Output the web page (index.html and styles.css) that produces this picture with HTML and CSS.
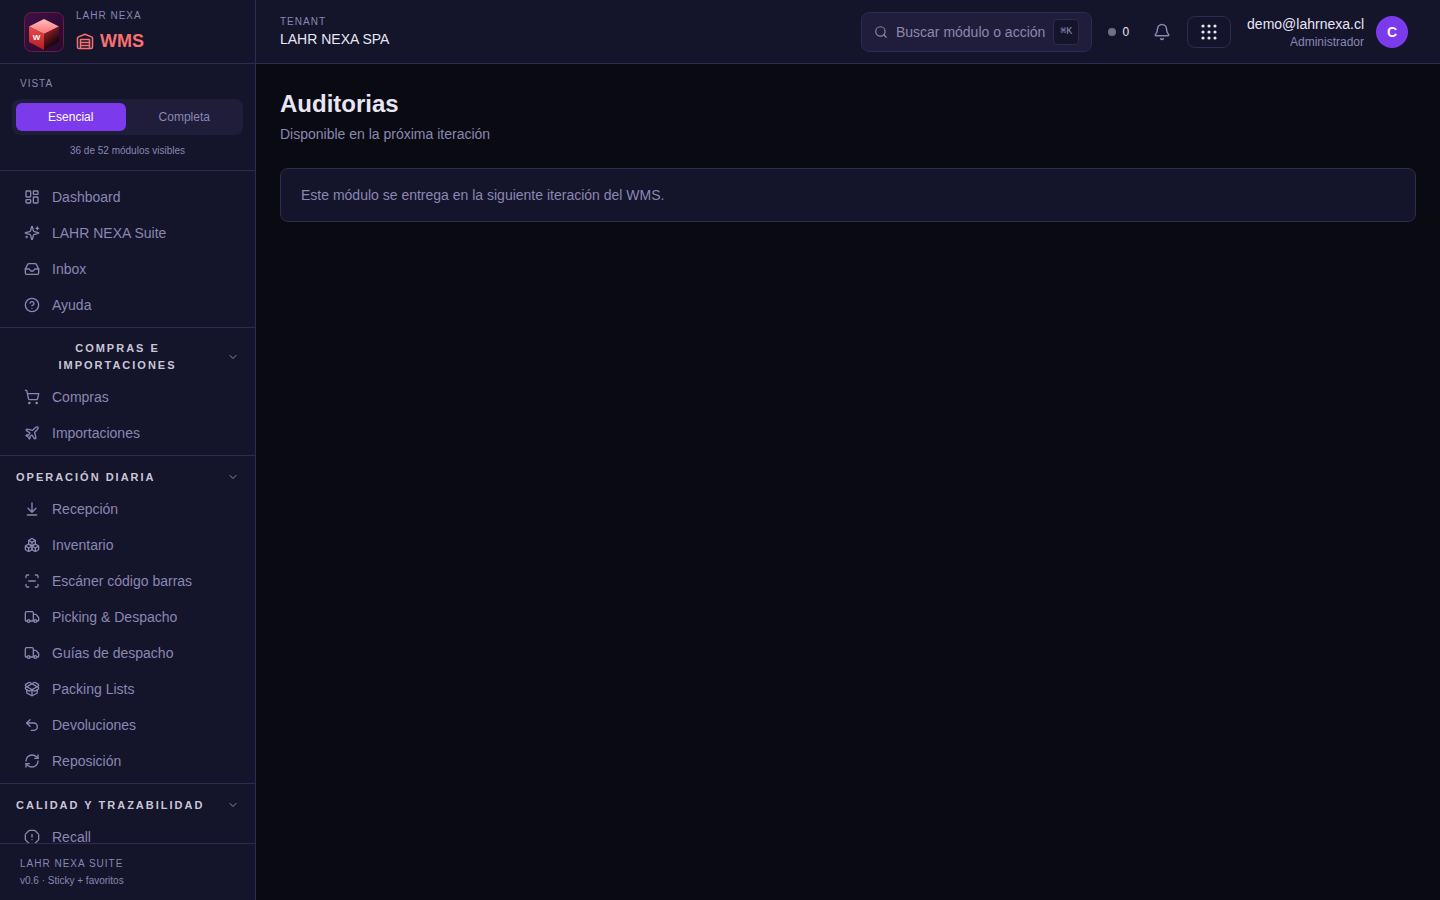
FILE: index.html
```html
<!DOCTYPE html>
<html lang="es">
<head>
<meta charset="utf-8">
<meta name="viewport" content="width=device-width, initial-scale=1">
<title>Auditorias · LAHR NEXA WMS</title>
<link rel="stylesheet" href="styles.css">
</head>
<body>
<div class="app">
  <aside class="sidebar">
    <div class="brand">
      <svg class="brand-logo" viewBox="0 0 40 40" aria-hidden="true">
        <defs>
          <linearGradient id="bg" x1="0" y1="0" x2="1" y2="1"><stop offset="0" stop-color="#3f1045"/><stop offset="1" stop-color="#26092e"/></linearGradient>
          <linearGradient id="top" x1="0" y1="0" x2="0" y2="1"><stop offset="0" stop-color="#ffc0bc"/><stop offset="1" stop-color="#fb7076"/></linearGradient>
          <linearGradient id="left" x1="0" y1="0" x2="0" y2="1"><stop offset="0" stop-color="#ee4a4c"/><stop offset="1" stop-color="#b01c22"/></linearGradient>
          <linearGradient id="right" x1="0.2" y1="0" x2="0.7" y2="1"><stop offset="0" stop-color="#9c262c"/><stop offset="0.3" stop-color="#74191f"/><stop offset="0.750" stop-color="#1c070d"/><stop offset="1" stop-color="#1c070d"/></linearGradient>
        </defs>
        <rect x="0.5" y="0.5" width="39" height="39" rx="7" fill="url(#bg)" stroke="#6b1d40"/>
        <path d="M20 7 35 14.500 20 22 5 14.500Z" fill="url(#top)"/>
        <path d="M5 14.500 20 22V38L5 30Z" fill="url(#left)"/>
        <path d="M35 14.500 20 22V38L35 30Z" fill="url(#right)"/>
        <text x="12.500" y="28" class="logo-letter">W</text>
      </svg>
      <div class="brand-text">
        <span class="eyebrow">LAHR NEXA</span>
        <span class="brand-name">
          <svg class="icon-18" viewBox="0 0 24 24" aria-hidden="true"><path d="M22 8.350V20a2 2 0 0 1-2 2H4a2 2 0 0 1-2-2V8.350A2 2 0 0 1 3.260 6.500l8-3.200a2 2 0 0 1 1.480 0l8 3.200A2 2 0 0 1 22 8.350Z"/><path d="M6 18h12M6 14h12"/><path d="M6 22V10h12v12"/></svg>
          WMS
        </span>
      </div>
    </div>

    <div class="view">
      <span class="eyebrow view-label" id="view-label">VISTA</span>
      <div class="toggle" role="group" aria-labelledby="view-label">
        <button class="toggle-btn is-active" type="button" aria-pressed="true">Esencial</button>
        <button class="toggle-btn" type="button" aria-pressed="false">Completa</button>
      </div>
      <p class="view-hint">36 de 52 módulos visibles</p>
    </div>

    <nav class="nav">
      <div class="nav-list nav-main">
        <a class="nav-item" href="#"><svg viewBox="0 0 24 24" aria-hidden="true"><rect width="7" height="9" x="3" y="3" rx="1"/><rect width="7" height="5" x="14" y="3" rx="1"/><rect width="7" height="9" x="14" y="12" rx="1"/><rect width="7" height="5" x="3" y="16" rx="1"/></svg>Dashboard</a>
        <a class="nav-item" href="#"><svg viewBox="0 0 24 24" aria-hidden="true"><path d="M9.937 15.500A2 2 0 0 0 8.500 14.063l-6.135-1.582a.5.5 0 0 1 0-.962L8.500 9.936A2 2 0 0 0 9.937 8.500l1.582-6.135a.5.5 0 0 1 .963 0L14.063 8.500A2 2 0 0 0 15.500 9.937l6.135 1.581a.5.5 0 0 1 0 .964L15.500 14.063a2 2 0 0 0-1.437 1.437l-1.582 6.135a.5.5 0 0 1-.963 0z"/><path d="M20 3v4M22 5h-4M4 17v2M5 18H3"/></svg>LAHR NEXA Suite</a>
        <a class="nav-item" href="#"><svg viewBox="0 0 24 24" aria-hidden="true"><path d="M22 12h-6l-2 3h-4l-2-3H2"/><path d="M5.450 5.110 2 12v6a2 2 0 0 0 2 2h16a2 2 0 0 0 2-2v-6l-3.450-6.890A2 2 0 0 0 16.760 4H7.240a2 2 0 0 0-1.790 1.110z"/></svg>Inbox</a>
        <a class="nav-item" href="#"><svg viewBox="0 0 24 24" aria-hidden="true"><circle cx="12" cy="12" r="10"/><path d="M9.090 9a3 3 0 0 1 5.830 1c0 2-3 3-3 3M12 17h.01"/></svg>Ayuda</a>
      </div>

      <section class="nav-group">
        <button class="group-head" type="button" aria-expanded="true"><span class="group-title">COMPRAS E IMPORTACIONES</span><svg viewBox="0 0 24 24" aria-hidden="true"><path d="m6 9 6 6 6-6"/></svg></button>
        <div class="nav-list">
          <a class="nav-item" href="#"><svg viewBox="0 0 24 24" aria-hidden="true"><circle cx="8" cy="21" r="1"/><circle cx="19" cy="21" r="1"/><path d="M2.050 2.050h2l2.660 12.420a2 2 0 0 0 2 1.580h9.780a2 2 0 0 0 1.950-1.570l1.650-7.430H5.120"/></svg>Compras</a>
          <a class="nav-item" href="#"><svg viewBox="0 0 24 24" aria-hidden="true"><path d="M17.800 19.200 16 11l3.500-3.500C21 6 21.500 4 21 3c-1-.5-3 0-4.500 1.500L13 8 4.800 6.200c-.5-.1-.9.1-1.100.5l-.3.5c-.2.5-.1 1 .3 1.300L9 12l-2 3H4l-1 1 3 2 2 3 1-1v-3l3-2 3.500 5.300c.3.4.8.5 1.300.3l.5-.2c.4-.3.6-.7.5-1.200z"/></svg>Importaciones</a>
        </div>
      </section>

      <section class="nav-group">
        <button class="group-head" type="button" aria-expanded="true"><span class="group-title">OPERACIÓN DIARIA</span><svg viewBox="0 0 24 24" aria-hidden="true"><path d="m6 9 6 6 6-6"/></svg></button>
        <div class="nav-list">
          <a class="nav-item" href="#"><svg viewBox="0 0 24 24" aria-hidden="true"><path d="M12 17V3M6 11l6 6 6-6M19 21H5"/></svg>Recepción</a>
          <a class="nav-item" href="#"><svg viewBox="0 0 24 24" aria-hidden="true"><path d="M2.970 12.920A2 2 0 0 0 2 14.630v3.240a2 2 0 0 0 .97 1.710l3 1.800a2 2 0 0 0 2.060 0L12 19v-5.500l-5-3-4.030 2.420Z"/><path d="m7 16.500-4.740-2.850M7 16.500l5-3M7 16.500v5.170"/><path d="M12 13.500V19l3.970 2.380a2 2 0 0 0 2.060 0l3-1.800a2 2 0 0 0 .97-1.710v-3.240a2 2 0 0 0-.97-1.710L17 10.500l-5 3Z"/><path d="m17 16.500-5-3M17 16.500l4.740-2.850M17 16.500v5.170"/><path d="M7.970 4.420A2 2 0 0 0 7 6.130v4.370l5 3 5-3V6.130a2 2 0 0 0-.97-1.710l-3-1.800a2 2 0 0 0-2.060 0l-3 1.800Z"/><path d="M12 8 7.260 5.150M12 8l4.740-2.850M12 13.500V8"/></svg>Inventario</a>
          <a class="nav-item" href="#"><svg viewBox="0 0 24 24" aria-hidden="true"><path d="M3 7V5a2 2 0 0 1 2-2h2M17 3h2a2 2 0 0 1 2 2v2M21 17v2a2 2 0 0 1-2 2h-2M7 21H5a2 2 0 0 1-2-2v-2M7 12h10"/></svg>Escáner código barras</a>
          <a class="nav-item" href="#"><svg viewBox="0 0 24 24" aria-hidden="true"><path d="M14 18V6a2 2 0 0 0-2-2H4a2 2 0 0 0-2 2v11a1 1 0 0 0 1 1h2M15 18H9M19 18h2a1 1 0 0 0 1-1v-3.650a1 1 0 0 0-.22-.624l-3.480-4.350A1 1 0 0 0 17.520 8H14"/><circle cx="17" cy="18" r="2"/><circle cx="7" cy="18" r="2"/></svg>Picking &amp; Despacho</a>
          <a class="nav-item" href="#"><svg viewBox="0 0 24 24" aria-hidden="true"><path d="M14 18V6a2 2 0 0 0-2-2H4a2 2 0 0 0-2 2v11a1 1 0 0 0 1 1h2M15 18H9M19 18h2a1 1 0 0 0 1-1v-3.650a1 1 0 0 0-.22-.624l-3.480-4.350A1 1 0 0 0 17.520 8H14"/><circle cx="17" cy="18" r="2"/><circle cx="7" cy="18" r="2"/></svg>Guías de despacho</a>
          <a class="nav-item" href="#"><svg viewBox="0 0 24 24" aria-hidden="true"><path d="M12 22v-9"/><path d="M15.170 2.210a1.670 1.670 0 0 1 1.630 0L21 4.570a1.930 1.930 0 0 1 0 3.360L8.820 14.790a1.655 1.655 0 0 1-1.640 0L3 12.430a1.930 1.930 0 0 1 0-3.360z"/><path d="M20 13v3.870a2.060 2.060 0 0 1-1.110 1.830l-6 3.080a1.930 1.930 0 0 1-1.780 0l-6-3.080A2.060 2.060 0 0 1 4 16.870V13"/><path d="M21 12.430a1.930 1.930 0 0 0 0-3.360L8.830 2.200a1.640 1.640 0 0 0-1.630 0L3 4.570a1.930 1.930 0 0 0 0 3.360l12.180 6.860a1.636 1.636 0 0 0 1.630 0z"/></svg>Packing Lists</a>
          <a class="nav-item" href="#"><svg viewBox="0 0 24 24" aria-hidden="true"><path d="M9 14 4 9l5-5"/><path d="M4 9h10.500a5.500 5.500 0 0 1 0 11H11"/></svg>Devoluciones</a>
          <a class="nav-item" href="#"><svg viewBox="0 0 24 24" aria-hidden="true"><path d="M3 12a9 9 0 0 1 9-9 9.750 9.750 0 0 1 6.740 2.740L21 8"/><path d="M21 3v5h-5M21 12a9 9 0 0 1-9 9 9.750 9.750 0 0 1-6.740-2.740L3 16"/><path d="M8 16H3v5"/></svg>Reposición</a>
        </div>
      </section>

      <section class="nav-group">
        <button class="group-head" type="button" aria-expanded="true"><span class="group-title">CALIDAD Y TRAZABILIDAD</span><svg viewBox="0 0 24 24" aria-hidden="true"><path d="m6 9 6 6 6-6"/></svg></button>
        <div class="nav-list">
          <a class="nav-item" href="#"><svg viewBox="0 0 24 24" aria-hidden="true"><path d="M15.312 2a2 2 0 0 1 1.414.586l4.688 4.688A2 2 0 0 1 22 8.688v6.624a2 2 0 0 1-.586 1.414l-4.688 4.688a2 2 0 0 1-1.414.586H8.688a2 2 0 0 1-1.414-.586l-4.688-4.688A2 2 0 0 1 2 15.312V8.688a2 2 0 0 1 .586-1.414l4.688-4.688A2 2 0 0 1 8.688 2z"/><path d="M12 8v4M12 16h.01"/></svg>Recall</a>
        </div>
      </section>
    </nav>

    <footer class="sidebar-foot">
      <span class="eyebrow">LAHR NEXA SUITE</span>
      <span class="version">v0.6 · Sticky + favoritos</span>
    </footer>
  </aside>

  <div class="content">
    <header class="topbar">
      <div class="tenant">
        <span class="eyebrow">TENANT</span>
        <span class="tenant-name">LAHR NEXA SPA</span>
      </div>
      <div class="tools">
        <button class="search" type="button">
          <svg class="icon-14" viewBox="0 0 24 24" aria-hidden="true"><circle cx="11" cy="11" r="8"/><path d="m21 21-4.300-4.300"/></svg>
          <span>Buscar módulo o acción</span>
          <kbd class="kbd">⌘K</kbd>
        </button>
        <div class="status"><span class="dot"></span>0</div>
        <div class="actions">
          <button class="bell" type="button" aria-label="Notificaciones"><svg class="icon-18" viewBox="0 0 24 24" aria-hidden="true"><path d="M10.268 21a2 2 0 0 0 3.464 0"/><path d="M3.262 15.326A1 1 0 0 0 4 17h16a1 1 0 0 0 .74-1.673C19.410 13.956 18 12.499 18 8A6 6 0 0 0 6 8c0 4.499-1.411 5.956-2.738 7.326"/></svg></button>
          <button class="apps" type="button" aria-label="Aplicaciones"><svg viewBox="0 0 18 18" aria-hidden="true"><circle cx="3" cy="3" r="1.600"/><circle cx="9" cy="3" r="1.600"/><circle cx="15" cy="3" r="1.600"/><circle cx="3" cy="9" r="1.600"/><circle cx="9" cy="9" r="1.600"/><circle cx="15" cy="9" r="1.600"/><circle cx="3" cy="15" r="1.600"/><circle cx="9" cy="15" r="1.600"/><circle cx="15" cy="15" r="1.600"/></svg></button>
        </div>
        <div class="user">
          <div class="user-text">
            <span class="user-mail">demo@lahrnexa.cl</span>
            <span class="user-role">Administrador</span>
          </div>
          <span class="avatar">C</span>
        </div>
      </div>
    </header>
    <main class="page">
      <h1 class="page-title">Auditorias</h1>
      <p class="page-sub">Disponible en la próxima iteración</p>
      <div class="card">Este módulo se entrega en la siguiente iteración del WMS.</div>
    </main>
  </div>
</div>
</body>
</html>
```
FILE: styles.css
```css
:root {
  --bg: #0a0a12;
  --surface: #14142a;
  --raised: #1f1d39;
  --border: #2d2b52;
  --text: #e8e6f5;
  --muted: #8b87b3;
  --accent: #7c3aed;
  --brand: #f87171;
}

* { box-sizing: border-box; }

body {
  margin: 0;
  background: var(--bg);
  color: var(--text);
  font-family: "Liberation Sans", Arial, sans-serif;
  font-size: 14px;
  line-height: 20px;
}

button {
  margin: 0;
  border: 0;
  padding: 0;
  background: none;
  color: inherit;
  font: inherit;
  cursor: pointer;
}

p, h1 { margin: 0; }

svg {
  flex: none;
  fill: none;
  stroke: currentColor;
  stroke-width: 2;
  stroke-linecap: round;
  stroke-linejoin: round;
}

.icon-14 { width: 14px; height: 14px; }
.icon-18 { width: 18px; height: 18px; }

.app {
  display: grid;
  grid-template-columns: 256px minmax(0, 1fr);
  height: 100vh;
}

.eyebrow {
  color: var(--muted);
  font-size: 10px;
  line-height: 15px;
  letter-spacing: 1px;
}

/* Sidebar */
.sidebar {
  display: flex;
  flex-direction: column;
  min-height: 0;
  background: var(--surface);
  border-right: 1px solid var(--border);
}

.brand {
  display: flex;
  flex: none;
  align-items: center;
  gap: 12px;
  height: 64px;
  padding: 0 24px;
  border-bottom: 1px solid var(--border);
}

.brand-logo { width: 40px; height: 40px; stroke: none; }

.brand-logo rect { stroke-width: 1; }

.logo-letter {
  fill: #fff;
  font-size: 8px;
  font-weight: 700;
  text-anchor: middle;
}

.brand-text {
  display: flex;
  flex-direction: column;
  gap: 4px;
}

.brand-name {
  display: flex;
  align-items: center;
  gap: 6px;
  color: var(--brand);
  font-size: 18px;
  font-weight: 700;
  line-height: 28px;
}

.view {
  display: flex;
  flex: none;
  flex-direction: column;
  padding: 12px;
  border-bottom: 1px solid var(--border);
}

.view-label { padding: 0 8px; margin-bottom: 8px; }

.toggle {
  display: grid;
  grid-template-columns: 1fr 1fr;
  gap: 4px;
  padding: 4px;
  border-radius: 8px;
  background: var(--raised);
}

.toggle-btn {
  padding: 6px 8px;
  border-radius: 6px;
  color: var(--muted);
  font-size: 12px;
  line-height: 16px;
}

.toggle-btn.is-active { background: var(--accent); color: #fff; }

.view-hint {
  margin-top: 8px;
  color: var(--muted);
  font-size: 10px;
  line-height: 15px;
  text-align: center;
}

.nav {
  flex: 1;
  min-height: 0;
  overflow: hidden;
}

.nav-list { padding: 0 12px 4px; }
.nav-main { padding-top: 8px; }

.nav-item {
  display: flex;
  align-items: center;
  gap: 12px;
  padding: 8px 12px;
  color: var(--muted);
  text-decoration: none;
}

.nav-item svg { width: 16px; height: 16px; }

.nav-group { border-top: 1px solid var(--border); }

.group-head {
  display: flex;
  align-items: center;
  justify-content: space-between;
  gap: 8px;
  width: 100%;
  min-height: 35px;
  padding: 12px 16px 5px;
  color: #c9c7d6;
  font-size: 11px;
  font-weight: 700;
  line-height: 17px;
  letter-spacing: 2px;
}

.group-head svg { width: 12px; height: 12px; color: var(--muted); }

.sidebar-foot {
  display: flex;
  flex: none;
  flex-direction: column;
  gap: 2px;
  padding: 12px 20px;
  border-top: 1px solid var(--border);
}

.version {
  color: var(--muted);
  font-size: 10px;
  line-height: 15px;
}

/* Top bar */
.content {
  display: flex;
  flex-direction: column;
  min-width: 0;
}

.topbar {
  display: flex;
  flex: none;
  align-items: center;
  justify-content: space-between;
  height: 64px;
  padding: 0 32px 0 24px;
  background: var(--surface);
  border-bottom: 1px solid var(--border);
}

.tenant { display: flex; flex-direction: column; }

.tools { display: flex; align-items: center; gap: 16px; }

.search {
  display: flex;
  align-items: center;
  gap: 8px;
  height: 40px;
  padding: 0 12px;
  border: 1px solid var(--border);
  border-radius: 8px;
  background: var(--raised);
  color: var(--muted);
}

.kbd {
  height: 26px;
  padding: 4px 6px;
  border: 1px solid var(--border);
  border-radius: 4px;
  background: var(--surface);
  font-family: "Liberation Mono", monospace;
  font-size: 10px;
  line-height: 16px;
}

.status {
  display: flex;
  align-items: center;
  gap: 6px;
  font-size: 12px;
}

.dot {
  width: 8px;
  height: 8px;
  border-radius: 50%;
  background: #6b7280;
}

.actions { display: flex; align-items: center; gap: 8px; }

.bell {
  display: flex;
  padding: 8px;
  color: var(--muted);
}

.apps {
  display: flex;
  align-items: center;
  justify-content: center;
  width: 44px;
  height: 32px;
  border: 1px solid var(--border);
  border-radius: 8px;
}

.apps svg {
  width: 18px;
  height: 18px;
  fill: var(--text);
  stroke: none;
}

.user { display: flex; align-items: center; gap: 12px; }

.user-text {
  display: flex;
  flex-direction: column;
  align-items: flex-end;
}

.user-role {
  color: var(--muted);
  font-size: 12px;
  line-height: 16px;
}

.avatar {
  display: flex;
  align-items: center;
  justify-content: center;
  width: 32px;
  height: 32px;
  border-radius: 50%;
  background: var(--accent);
  color: #fff;
  font-weight: 700;
}

/* Page */
.page { padding: 24px; }

.page-title {
  font-size: 24px;
  font-weight: 700;
  line-height: 32px;
}

.page-sub { margin-top: 4px; color: var(--muted); }

.card {
  margin-top: 24px;
  padding: 16px 20px;
  border: 1px solid var(--border);
  border-radius: 8px;
  background: var(--surface);
  color: var(--muted);
}
```
